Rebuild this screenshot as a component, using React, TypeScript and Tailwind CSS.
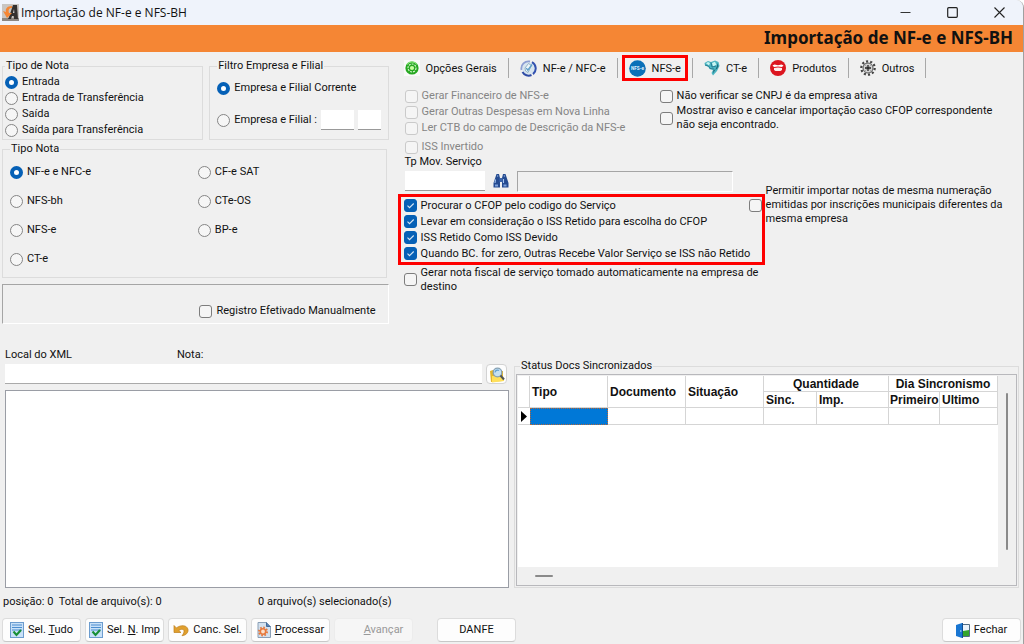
import { useState } from "react";
import type { ReactNode } from "react";
import clsx from "clsx";

const TIPO_DE_NOTA = ["Entrada", "Entrada de Transferência", "Saída", "Saída para Transferência"];

// listed row by row, two per row
const TIPO_NOTA = ["NF-e e NFC-e", "CF-e SAT", "NFS-bh", "CTe-OS", "NFS-e", "BP-e", "CT-e"];

const SERVICO_OPTIONS = [
  "Procurar o CFOP pelo codigo do Serviço",
  "Levar em consideração o ISS Retido para escolha do CFOP",
  "ISS Retido Como ISS Devido",
  "Quando BC. for zero, Outras Recebe Valor Serviço se ISS não Retido",
];

function Radio({ label, name, defaultChecked }: { label: ReactNode; name: string; defaultChecked?: boolean }) {
  return (
    <label className="flex items-center gap-1 whitespace-nowrap">
      <input
        type="radio"
        name={name}
        defaultChecked={defaultChecked}
        className="size-[13px] shrink-0 appearance-none rounded-full border border-[#858585] bg-[#f6f6f6] checked:border-4 checked:border-[#0560b6] checked:bg-white"
      />
      {label}
    </label>
  );
}

function Check({ label, defaultChecked, disabled, className }: {
  label: string;
  defaultChecked?: boolean;
  disabled?: boolean;
  className?: string;
}) {
  return (
    <label className={clsx("flex items-center gap-1 leading-[14px]", disabled && "text-[#858585]", className)}>
      <span className="grid shrink-0">
        <input
          type="checkbox"
          defaultChecked={defaultChecked}
          disabled={disabled}
          className="peer col-start-1 row-start-1 size-[13px] appearance-none rounded-[3px] border border-[#7d7d7d] bg-[#f5f5f5] checked:border-[#0560b6] checked:bg-[#0560b6] disabled:border-[#cacaca]"
        />
        <svg viewBox="0 0 13 13" className="pointer-events-none col-start-1 row-start-1 hidden size-[13px] peer-checked:block">
          <path d="M3.5 6.7l2 2 4.2-4.2" fill="none" stroke="#d5e5f5" strokeWidth="1.1" />
        </svg>
      </span>
      {label}
    </label>
  );
}

function Group({ title, className, children }: { title: string; className?: string; children: ReactNode }) {
  return (
    <fieldset className={clsx("min-w-0 border border-[#dcdcdc]", className)}>
      <legend className="px-px leading-4">{title}</legend>
      {children}
    </fieldset>
  );
}

/* ---------- icons ---------- */

function AppIcon() {
  return (
    <svg viewBox="0 0 17 17" className="size-[17px]">
      <rect width="17" height="17" fill="#c9c5c1" />
      <path d="M0 14h17v3H0z" fill="#8d8782" />
      <path d="M7 13L11 1h4l1 14h-4l-.3-3H10l-1 3H6z" fill="#33302f" />
      <path d="M11 9l1-4 .4 4z" fill="#ddd" />
      <path d="M10 2C5 2 3 5 4 8L1 7l4 7 5-5-3 0C6 6 7 4 10 4z" fill="#f58634" />
    </svg>
  );
}

function PowerIcon() {
  return (
    <svg viewBox="0 0 16 16" className="size-4">
      <rect width="16" height="16" fill="#fafafa" />
      <circle cx="8" cy="8" r="6.6" fill="#27a822" />
      <circle cx="8" cy="8" r="4" fill="none" stroke="#dff8d8" strokeWidth="1.1" strokeDasharray="2 1" />
      <circle cx="8" cy="8" r="2.1" fill="#c9ff9f" />
      <path d="M3 4.5a6 6 0 0 1 10 0" fill="none" stroke="#8ae57b" strokeWidth="1.2" />
    </svg>
  );
}

function NfeIcon() {
  return (
    <svg viewBox="0 0 17 17" className="size-[17px]">
      <circle cx="8.5" cy="8.5" r="6.2" fill="#d8e5ef" />
      <path d="M1.5 10A7.2 7.2 0 0 1 10 1.5" fill="none" stroke="#8c9ed2" strokeWidth="1.8" />
      <path d="M12 2.2a7.2 7.2 0 0 1 1 11.9" fill="none" stroke="#3252b0" strokeWidth="2" />
      <path d="M11.5 15a7 7 0 0 1-9-3" fill="none" stroke="#2e4ba5" strokeWidth="2" />
      <path d="M5 8l3.5-4.5 3 2L8 12.5 5.5 11z" fill="#eef6fa" stroke="#7ea3bb" strokeWidth=".8" />
      <path d="M6.3 8.2l1.5 2L12 4.5" fill="none" stroke="#5b9dc9" strokeWidth="1.3" />
    </svg>
  );
}

function NfseIcon() {
  return (
    <svg viewBox="0 0 17 17" className="size-[17px]">
      <circle cx="8.5" cy="8.5" r="8.3" fill="#0b70b8" />
      <text x="8.5" y="10.3" textAnchor="middle" fontSize="4.6" fontWeight="700" fill="#e4f3fc">NFS-e</text>
    </svg>
  );
}

function CteIcon() {
  return (
    <svg viewBox="0 0 16 16" className="size-4">
      <path d="M.5 3L4 1l3 1 4-1.5L14.5 2l1 4-2.5 5-4 4.5L7.5 13 9 10 5.5 9 4.5 7 1 5.5z" fill="#4cb5c2" />
      <path d="M2 3.3L4 2l2 1-1 2.5zM8 3l3-1.2L12.5 5 9 6.5z" fill="#c9f5f2" />
      <path d="M13 3l1.5 3-1.5 3-1.5.5L13 6zM9.5 10l2-.5-2.5 4z" fill="#20697a" />
      <path d="M1 5l3.5 1L6 8.5l4 .5" fill="none" stroke="#277c91" strokeWidth=".9" />
      <path d="M7 2.5L8 7l4-1" fill="none" stroke="#1c6e89" strokeWidth=".8" />
    </svg>
  );
}

function ProductsIcon() {
  return (
    <svg viewBox="0 0 16 16" className="size-4">
      <circle cx="8" cy="8" r="8" fill="#dc1620" />
      <path d="M2.5 5.5l2-1 3.5.8 3.5-.8 2 1-1.5 1.6L8 6.6l-4 .5z" fill="#fff" />
      <path d="M4 7.9l4-.5 4 .5v2l-1.5 1.2h-5L4 9.9z" fill="#fff0f0" />
    </svg>
  );
}

function GearIcon() {
  return (
    <svg viewBox="0 0 16 16" className="size-4">
      <circle cx="8" cy="8" r="6.7" fill="none" stroke="#444" strokeWidth="2.2" strokeDasharray="2.1 2.1" />
      <circle cx="8" cy="8" r="5" fill="#d3d3d3" stroke="#555" strokeWidth="1" />
      <path d="M5 5l6 6M11 5l-6 6" stroke="#999" strokeWidth=".7" />
      <path d="M8 5v6M5 8h6" stroke="#222" strokeWidth="1.3" />
    </svg>
  );
}

function BinocularsIcon() {
  return (
    <svg viewBox="0 0 16 14" className="h-[14px] w-4">
      <path d="M3.5 0H6l1 4v9.5H.5V9zM10 0h2.5l3 9v4.5H9V4z" fill="#254b91" />
      <path d="M6.5 4h3v4h-3z" fill="#3d66ab" />
      <path d="M4 2h1.2M10.8 2H12M2.5 5.5L2 9M10.5 5v4" stroke="#a5c4f0" strokeWidth="1.1" />
      <path d="M2 10.5h3v2H2zM10.5 10.5h3v2h-3z" fill="#7fa2dc" />
    </svg>
  );
}

function FolderSearchIcon() {
  return (
    <svg viewBox="0 0 16 17" className="h-[17px] w-4">
      <path d="M1 5l3-1 1 1h9v10l-12 1z" fill="#e3b62c" />
      <path d="M3 10h11l1 5-12 1.5z" fill="#ffe05a" />
      <circle cx="8.5" cy="6.5" r="4.3" fill="#c5e1f3" stroke="#86a0b2" strokeWidth="1.3" />
      <path d="M6 6.5a2.6 2.6 0 0 1 4-2" stroke="#5f9fd2" strokeWidth="1.2" fill="none" />
      <path d="M11.5 9.5l3.5 4" stroke="#4f5457" strokeWidth="2" />
    </svg>
  );
}

function ListCheckIcon() {
  return (
    <svg viewBox="0 0 14 16" className="h-4 w-[14px]">
      <rect x=".5" y=".5" width="13" height="15" fill="#c9e1f8" stroke="#6c9cce" />
      <path d="M2 3h10M2 5.5h10M2 8h10" stroke="#4c8ed0" strokeWidth="1.2" />
      <path d="M3.5 9.5l3 3.5L11 8" fill="none" stroke="#188f36" strokeWidth="2.1" />
    </svg>
  );
}

function UndoIcon() {
  return (
    <svg viewBox="0 0 16 13" className="h-[13px] w-4">
      <path d="M1 1.5v7h7L5.8 6.5C8.5 4.5 11.6 5 11 8c-.3 1.5-1 2.6-2 3.7C13 11.4 15.5 8.5 15 5.5 14 1 8 .5 3.4 3.9z" fill="#e0a02e" stroke="#bd7c18" strokeWidth=".7" />
    </svg>
  );
}

function ProcessIcon() {
  return (
    <svg viewBox="0 0 14 16" className="h-4 w-[14px]">
      <path d="M1 .5h8.5l4 4v11H1z" fill="#d3e1ef" stroke="#8a9fb6" />
      <path d="M9.5.5v4h4" fill="#5983b2" stroke="#436b9a" />
      <circle cx="6" cy="9.5" r="4" fill="none" stroke="#e7793d" strokeWidth="2" strokeDasharray="1.6 1.5" />
      <circle cx="6" cy="9.5" r="2.7" fill="#fae0cc" stroke="#e7793d" strokeWidth="1.6" />
    </svg>
  );
}

function DoorIcon() {
  return (
    <svg viewBox="0 0 14 15" className="h-[15px] w-[14px]">
      <path d="M6 1.5h7.5v12H6z" fill="#eaf3fb" stroke="#526d85" />
      <path d="M7 8l6-1v6H7z" fill="#35a52c" />
      <path d="M0 2l6-2h1v15H6l-6-2z" fill="#1976d2" />
      <path d="M6 0h1v15H6z" fill="#104d91" />
      <circle cx="4.8" cy="8" r=".7" fill="#d6eafa" />
    </svg>
  );
}

const TABS = [
  { label: "Opções Gerais", icon: <PowerIcon /> },
  { label: "NF-e / NFC-e", icon: <NfeIcon /> },
  { label: "NFS-e", icon: <NfseIcon /> },
  { label: "CT-e", icon: <CteIcon /> },
  { label: "Produtos", icon: <ProductsIcon /> },
  { label: "Outros", icon: <GearIcon /> },
];

function ActionButton({ icon, disabled, className, children }: {
  icon?: ReactNode;
  disabled?: boolean;
  className?: string;
  children: ReactNode;
}) {
  return (
    <button
      type="button"
      disabled={disabled}
      className={clsx(
        "flex h-6 w-[79px] items-center justify-center gap-1 rounded-[4px] border border-[#dcdcdc] border-b-[#c8c8c8] bg-[#fdfdfd] whitespace-nowrap",
        "disabled:border-[#ececec] disabled:bg-[#f6f6f6] disabled:text-[#999]",
        className,
      )}
    >
      {icon}
      <span>{children}</span>
    </button>
  );
}

function TitleBar() {
  return (
    <header>
      <div className="flex h-[25px] items-center bg-[#eff3fb] pl-0.5">
        <AppIcon />
        <h1 className="flex-1 pl-0.5 font-['Open_Sans',sans-serif] text-[12px] leading-4">Importação de NF-e e NFS-BH</h1>
        <button type="button" aria-label="Minimizar" className="flex h-full w-[47px] items-center justify-center">
          <svg viewBox="0 0 11 11" className="size-[11px]"><path d="M.5 5.5h10" stroke="#333" /></svg>
        </button>
        <button type="button" aria-label="Maximizar" className="flex h-full w-[47px] items-center justify-center">
          <svg viewBox="0 0 11 11" className="size-[11px]"><rect x=".7" y=".7" width="9.6" height="9.6" rx="1" fill="none" stroke="#222" strokeWidth="1.2" /></svg>
        </button>
        <button type="button" aria-label="Fechar janela" className="flex h-full w-[47px] items-center justify-center">
          <svg viewBox="0 0 11 11" className="size-[11px]"><path d="M.5.5l10 10M10.5.5l-10 10" stroke="#222" strokeWidth="1.1" /></svg>
        </button>
      </div>
      <div className="flex h-[27px] items-center justify-end bg-[#f58634] pr-2.5 pb-0.5">
        <h2 className="font-['Noto_Sans',sans-serif] text-[17px] leading-6 font-bold">Importação de NF-e e NFS-BH</h2>
      </div>
    </header>
  );
}

function Filters() {
  return (
    <div className="flex flex-col">
      <div className="grid grid-cols-[202fr_180fr] gap-1.5">
        <Group title="Tipo de Nota" className="px-0.5 pb-px">
          {TIPO_DE_NOTA.map((label, i) => (
            <div key={label} className="flex h-4 items-center">
              <Radio name="tipo-de-nota" label={label} defaultChecked={i === 0} />
            </div>
          ))}
        </Group>
        <Group title="Filtro Empresa e Filial" className="px-[7px]">
          <div className="flex flex-col gap-3 pt-1">
            <div className="flex h-5 items-center">
              <Radio name="filtro" label="Empresa e Filial Corrente" defaultChecked />
            </div>
            <div className="flex h-5 items-center gap-1">
              <Radio name="filtro" label="Empresa e Filial :" />
              <input aria-label="Empresa" className="h-5 w-[33px] border-b border-[#999] bg-white px-1" />
              <input aria-label="Filial" className="h-5 w-[23px] border-b border-[#999] bg-white px-1" />
            </div>
          </div>
        </Group>
      </div>
      <Group title="Tipo Nota" className="mt-px mr-0.5 px-[7px] pt-px pb-[3px]">
        <div className="grid grid-cols-[188fr_181fr]">
          {TIPO_NOTA.map((label, i) => (
            <div key={label} className="flex h-[29px] items-center">
              <Radio name="tipo-nota" label={label} defaultChecked={i === 0} />
            </div>
          ))}
        </div>
      </Group>
      <div className="mt-1.5 flex h-10 items-end justify-end border border-t-[#a5a5a5] border-r-white border-b-white border-l-[#a5a5a5] pr-3 pb-[5px]">
        <Check label="Registro Efetivado Manualmente" />
      </div>
    </div>
  );
}

function NfseOptions() {
  const [tab, setTab] = useState("NFS-e");

  return (
    <div className="min-w-0">
      <nav role="tablist" className="-mt-[3px] -ml-[5px] flex items-center">
        {TABS.map((t) => (
          <div key={t.label} className="flex items-center">
            <button
              type="button"
              role="tab"
              aria-selected={tab === t.label}
              onClick={() => setTab(t.label)}
              className={clsx(
                "mx-1 flex h-[26px] items-center gap-1.5 border-[3px] px-1 whitespace-nowrap",
                tab === t.label ? "border-[#fe0000]" : "border-transparent",
              )}
            >
              {t.icon}
              <span className="pt-0.5">{t.label}</span>
            </button>
            <span className="h-5 w-px bg-[#a8a8a8]" />
          </div>
        ))}
      </nav>

      <div className="flex px-[7px] pt-2">
        <div className="flex w-[255px] shrink-0 flex-col gap-0.5">
          <Check disabled label="Gerar Financeiro de NFS-e" />
          <Check disabled label="Gerar Outras Despesas em Nova Linha" />
          <Check disabled label="Ler CTB do campo de Descrição da NFS-e" />
          <Check disabled label="ISS Invertido" className="mt-[3px]" />
        </div>
        <div className="flex max-w-[336px] flex-col gap-px">
          <Check label="Não verificar se CNPJ é da empresa ativa" />
          <Check label="Mostrar aviso e cancelar importação caso CFOP correspondente não seja encontrado." />
        </div>
      </div>

      <div className="flex">
        <div className="w-[367px] shrink-0">
          <div className="px-[7px]">
            <label htmlFor="tp-mov" className="leading-4">Tp Mov. Serviço</label>
            <div className="flex items-center gap-2">
              <input id="tp-mov" className="h-5 w-20 border-b border-[#999] bg-white px-1" />
              <button type="button" aria-label="Pesquisar tipo de movimento"><BinocularsIcon /></button>
              <input
                aria-label="Descrição do tipo de movimento"
                readOnly
                className="h-[21px] w-[216px] border border-t-[#a5a5a5] border-r-white border-b-white border-l-[#a5a5a5] bg-[#f0f0f0] px-1"
              />
            </div>
          </div>
          <div className="mt-0.5 flex flex-col gap-0.5 border-[3px] border-[#fe0000] px-[3px] pt-0.5 pb-px">
            {SERVICO_OPTIONS.map((label) => (
              <Check key={label} label={label} defaultChecked className="whitespace-nowrap" />
            ))}
          </div>
        </div>
        <Check
          label="Permitir importar notas de mesma numeração emitidas por inscrições municipais diferentes da mesma empresa"
          className="z-10 mt-[30px] -ml-4 max-w-[258px] self-start"
        />
      </div>
      <Check
        label="Gerar nota fiscal de serviço tomado automaticamente na empresa de destino"
        className="mt-px ml-1.5 max-w-[366px]"
      />
    </div>
  );
}

function XmlFiles() {
  return (
    <section className="flex min-w-0 flex-col px-[5px] pt-[23px]">
      <div className="flex leading-4">
        <label htmlFor="xml-path" className="w-[172px]">Local do XML</label>
        <span>Nota:</span>
      </div>
      <div className="mt-px flex gap-1">
        <input id="xml-path" className="h-5 min-w-0 flex-1 border-b border-[#aaa] bg-white px-1" />
        <button
          type="button"
          aria-label="Procurar pasta"
          className="mr-0.5 flex h-5 w-[21px] items-center justify-center rounded-[4px] border border-[#d2d2d2] bg-[#fdfdfd]"
        >
          <FolderSearchIcon />
        </button>
      </div>
      <textarea
        aria-label="Arquivos XML"
        className="mt-1.5 w-full flex-1 resize-none border border-[#9a9da5] bg-white p-1"
      />
    </section>
  );
}

const CELL = "border-r border-b border-[#d5d5d5] px-0.5";

function SyncStatus() {
  return (
    <fieldset className="mt-[34px] mr-1 flex min-w-0 flex-col border border-[#dcdcdc] px-px pb-px">
      <legend className="ml-1 px-px leading-4">Status Docs Sincronizados</legend>
      <div className="flex h-full flex-col border border-[#b8b8bc] bg-[#f0f0f0] p-px">
        <div className="flex flex-1">
          <div className="min-w-0 flex-1 bg-white">
            <table className="w-full table-fixed border-separate border-spacing-0 text-left font-['Liberation_Sans',Arial,sans-serif] text-[12px] leading-[14px]">
              <colgroup>
                <col className="w-[12px]" />
                <col className="w-[78px]" />
                <col className="w-[78px]" />
                <col className="w-[78px]" />
                <col className="w-[53px]" />
                <col className="w-[72px]" />
                <col className="w-[51px]" />
                <col />
              </colgroup>
              <thead>
                <tr className="h-4">
                  <td rowSpan={2} className={CELL} />
                  <th rowSpan={2} className={CELL}>Tipo</th>
                  <th rowSpan={2} className={CELL}>Documento</th>
                  <th rowSpan={2} className={CELL}>Situação</th>
                  <th colSpan={2} className={clsx(CELL, "text-center")}>Quantidade</th>
                  <th colSpan={2} className={clsx(CELL, "text-center")}>Dia Sincronismo</th>
                </tr>
                <tr className="h-4">
                  <th className={CELL}>Sinc.</th>
                  <th className={CELL}>Imp.</th>
                  <th className="border-r border-b border-[#d5d5d5] pl-px">Primeiro</th>
                  <th className={CELL}>Ultimo</th>
                </tr>
              </thead>
              <tbody>
                <tr className="h-[17px]">
                  <td className="border-b border-[#d5d5d5] pl-[3px]">
                    <svg viewBox="0 0 6 11" className="h-[11px] w-1.5"><path d="M0 0l6 5.5L0 11z" /></svg>
                  </td>
                  <td className="border border-dotted border-[#b5683a] bg-[#0078d7]" />
                  <td className={CELL} />
                  <td className={CELL} />
                  <td className={CELL} />
                  <td className={CELL} />
                  <td className={CELL} />
                  <td className={CELL} />
                </tr>
              </tbody>
            </table>
          </div>
          <div className="flex w-[17px] justify-center py-[17px]">
            <div className="w-0.5 rounded-full bg-[#8a8a8a]" />
          </div>
        </div>
        <div className="flex h-[17px] items-center pl-[17px]">
          <div className="h-0.5 w-[18px] rounded-full bg-[#8a8a8a]" />
        </div>
      </div>
    </fieldset>
  );
}

export default function App() {
  return (
    <div className="flex min-h-screen flex-col overflow-hidden rounded-tr-lg border-r border-[#a0a0a0] bg-[#f0f0f0] font-[Roboto,'Liberation_Sans',sans-serif] text-[11px] text-[#111]">
      <TitleBar />
      <main className="flex flex-1 flex-col">
        <div className="grid grid-cols-[387fr_626fr] gap-[9px] pt-1.5 pl-0.5">
          <Filters />
          <NfseOptions />
        </div>
        <div className="grid flex-1 grid-cols-[514fr_509fr]">
          <XmlFiles />
          <SyncStatus />
        </div>
      </main>
      <footer>
        <div className="flex px-[3px] pt-1.5 pb-1 leading-4 whitespace-pre">
          <p className="w-[255px]">posição: 0  Total de arquivo(s): 0</p>
          <p>0 arquivo(s) selecionado(s)</p>
        </div>
        <div className="flex gap-1 px-0.5 pt-1 pb-0.5">
          <ActionButton icon={<ListCheckIcon />}>Sel. <u>T</u>udo</ActionButton>
          <ActionButton icon={<ListCheckIcon />}>Sel. <u>N</u>. Imp</ActionButton>
          <ActionButton icon={<UndoIcon />}>Canc. Sel.</ActionButton>
          <ActionButton icon={<ProcessIcon />}><u>P</u>rocessar</ActionButton>
          <ActionButton disabled className="pl-5"><u>A</u>vançar</ActionButton>
          <ActionButton className="ml-5">DANFE</ActionButton>
          <ActionButton icon={<DoorIcon />} className="ml-auto">Fechar</ActionButton>
        </div>
      </footer>
    </div>
  );
}
